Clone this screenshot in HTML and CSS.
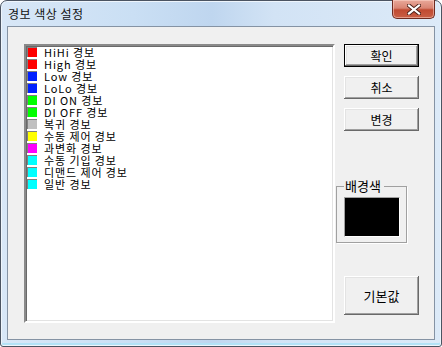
FILE: index.html
```html
<html>
  <head>
    <meta charset="UTF-8" />
    <title>경보 색상 설정</title>
    <link rel="stylesheet" href="styles.css">
  </head>
  <body>
    <div class="window">
      <div class="titlebar">
        <span class="title">경보 색상 설정</span>
        <button class="close" aria-label="닫기">
          <svg width="14" height="11" viewBox="0 0 14 11">
            <path d="M2 1.5 L12 9.5 M12 1.5 L2 9.5" stroke="#4a1e16" stroke-width="4" stroke-linecap="square" fill="none"/>
            <path d="M2 1.5 L12 9.5 M12 1.5 L2 9.5" stroke="#fff" stroke-width="2.2" stroke-linecap="square" fill="none"/>
          </svg>
        </button>
      </div>

      <div class="client">
        <ul class="alarm-list">
          <li><span class="swatch red"></span>HiHi 경보</li>
          <li><span class="swatch red"></span>High 경보</li>
          <li><span class="swatch blue"></span>Low 경보</li>
          <li><span class="swatch blue"></span>LoLo 경보</li>
          <li><span class="swatch green"></span>DI ON 경보</li>
          <li><span class="swatch green"></span>DI OFF 경보</li>
          <li><span class="swatch silver"></span>복귀 경보</li>
          <li><span class="swatch yellow"></span>수동 제어 경보</li>
          <li><span class="swatch magenta"></span>과변화 경보</li>
          <li><span class="swatch cyan"></span>수동 기입 경보</li>
          <li><span class="swatch cyan"></span>디맨드 제어 경보</li>
          <li><span class="swatch cyan"></span>일반 경보</li>
        </ul>

        <div class="side">
          <button class="btn default">확인</button>
          <button class="btn">취소</button>
          <button class="btn">변경</button>

          <fieldset class="bg-group">
            <legend>배경색</legend>
            <div class="bg-color"></div>
          </fieldset>

          <button class="btn tall">기본값</button>
        </div>
      </div>
    </div>
  </body>
</html>
```

FILE: styles.css
```css
body {
  margin: 0;
  background-color: #fff;
  font-family: "Noto Sans CJK KR", "Noto Sans", sans-serif;
  font-size: 12px;
  color: #000;
}

.window {
  box-sizing: border-box;
  width: 442px;
  height: 347px;
  display: flex;
  flex-direction: column;
  padding: 0 6px 6px 6px;
  border: 1px solid #4b5462;
  border-radius: 7px 7px 3px 3px;
  background: linear-gradient(90deg, #d8e7f7 0%, #cadff4 30%, #bfd6ef 48%, #d2e3f5 62%, #dceaf8 100%);
  box-shadow: inset 0 0 0 1px #eef5fc, inset 0 -2px 0 1px #b3e2f6;
}

.titlebar {
  height: 25px;
  display: flex;
  flex-direction: row;
  align-items: flex-start;
}

.title {
  margin-top: 6px;
  margin-left: 1px;
  font-size: 12px;
  line-height: 14px;
  letter-spacing: 0.5px;
  color: #111;
}

.close {
  margin-left: auto;
  margin-top: -1px;
  width: 43px;
  height: 19px;
  padding: 0;
  display: flex;
  align-items: center;
  justify-content: center;
  border: 1px solid #6e2b20;
  border-top: none;
  border-radius: 0 0 5px 5px;
  background: linear-gradient(180deg, #e9a99a 0%, #d98473 45%, #c04a31 55%, #c95f45 100%);
  box-shadow: inset 0 0 0 1px rgba(255, 220, 210, 0.5);
}

.client {
  flex: 1;
  display: flex;
  flex-direction: row;
  align-items: flex-start;
  padding: 17px 0 0 16px;
  border: 1px solid #8593a4;
  background-color: #f0f0f0;
}

.alarm-list {
  box-sizing: border-box;
  width: 311px;
  height: 279px;
  margin: 0;
  padding: 0;
  list-style: none;
  background-color: #fff;
  border-style: solid;
  border-width: 2px;
  border-color: #8a8a8a #fff #fff #8a8a8a;
  box-shadow: inset 1px 1px 0 #696969, inset -1px -1px 0 #e3e3e3;
}

.alarm-list li {
  height: 12px;
  display: flex;
  flex-direction: row;
  align-items: center;
  font-size: 11px;
  line-height: 12px;
  letter-spacing: 0.9px;
  white-space: nowrap;
}

.swatch {
  box-sizing: border-box;
  flex: none;
  width: 10px;
  height: 10px;
  margin-left: 1px;
  margin-right: 7px;
  border-top: 1px solid #808080;
  border-left: 1px solid #808080;
}

.red { background-color: #ff0000; }
.blue { background-color: #0020ff; }
.green { background-color: #00ff00; }
.silver { background-color: #c0c0c0; }
.yellow { background-color: #ffff00; }
.magenta { background-color: #ff00ff; }
.cyan { background-color: #00ffff; }

.side {
  width: 83px;
  margin-left: 1px;
  display: flex;
  flex-direction: column;
  align-items: flex-start;
}

.btn {
  box-sizing: border-box;
  width: 75px;
  height: 23px;
  margin: 0 0 9px 8px;
  padding: 0;
  border: none;
  background-color: #f0f0f0;
  font-family: inherit;
  font-size: 12px;
  color: #000;
  box-shadow: inset -1px -1px 0 #696969, inset 1px 1px 0 #fff, inset -2px -2px 0 #a0a0a0, inset 2px 2px 0 #e3e3e3;
}

.btn.default {
  border: 1px solid #000;
}

.btn.tall {
  height: 39px;
  margin-top: 33px;
  font-size: 13px;
}

.bg-group {
  box-sizing: border-box;
  width: 71px;
  height: 64px;
  margin: 39px 0 0 0;
  padding: 4px 0 5px 7px;
  border: 1px solid #a0a0a0;
  box-shadow: 1px 1px 0 #fff;
}

.bg-group legend {
  padding: 0 3px 0 1px;
  line-height: 14px;
  font-size: 13px;
}

.bg-color {
  box-sizing: border-box;
  width: 56px;
  height: 40px;
  background-color: #000;
  border-top: 1px solid #a0a0a0;
  border-left: 1px solid #a0a0a0;
  border-bottom: 1px solid #fff;
  border-right: 1px solid #fff;
}
```
